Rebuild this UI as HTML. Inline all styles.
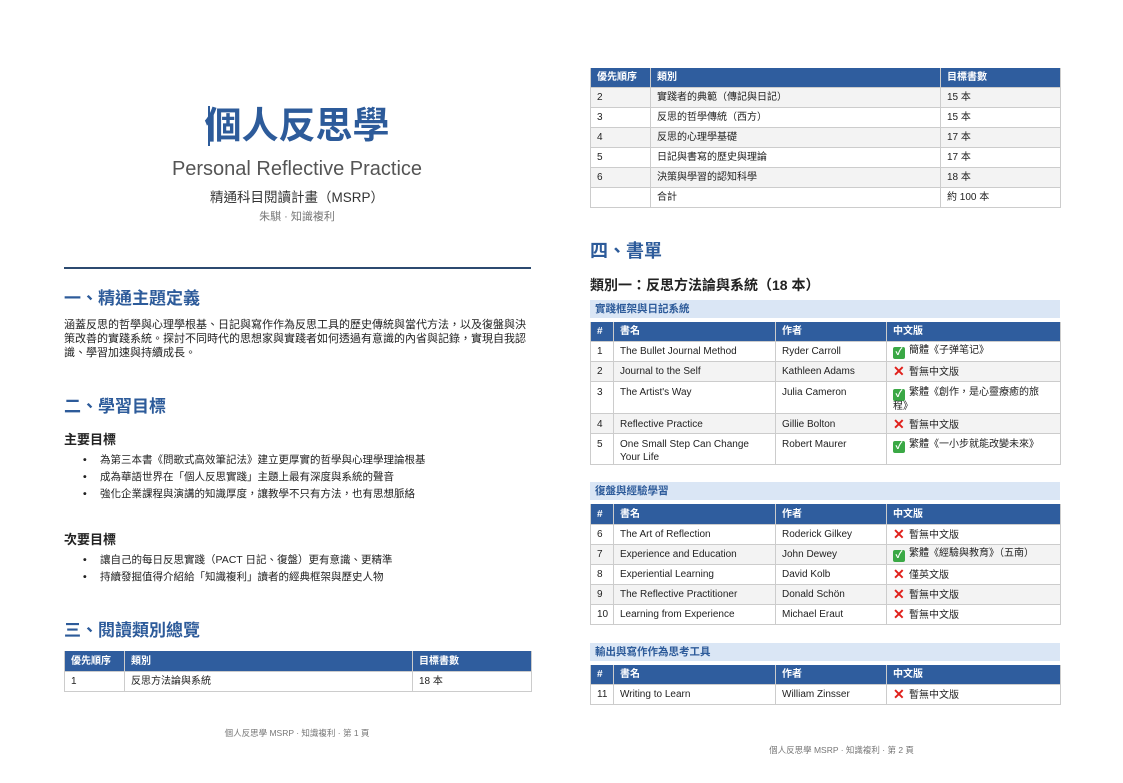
<!DOCTYPE html>
<html><head><meta charset="utf-8"><style>
*{margin:0;padding:0;box-sizing:border-box}
body{width:1123px;height:783px;background:#fff;position:relative;overflow:hidden;font-family:"Liberation Sans","Noto Sans CJK TC",sans-serif;color:#222}
.a{position:absolute;white-space:nowrap}
.h2{font-size:17px;font-weight:bold;color:#2d5b9a;line-height:20px}
.h3{font-size:13px;font-weight:bold;color:#222;line-height:16px}
.p{font-size:11px;line-height:14px;color:#222}
.li{font-size:10.5px;line-height:14px}
.li b{position:absolute;left:-17px;font-weight:bold}
table{position:absolute;border-collapse:collapse;font-size:10px;table-layout:fixed}
td,th{border:1px solid #ccc;padding:2px 6px 0;text-align:left;vertical-align:middle;line-height:12px}
th{background:#2f5d9e;color:#fff;font-weight:bold;border-color:#fff #ccc;border-top:none;border-bottom:none}
td.t{vertical-align:top;padding-top:5px;line-height:12.5px}
tr.g td{background:#f3f3f3}
.band{position:absolute;background:#dae6f5;color:#2d5b9a;font-size:10.5px;font-weight:bold;padding:3px 5px;line-height:12px;height:18px;left:590px;width:470px}
.ok{display:inline-block;width:12px;height:12px;background:#3aa845;border-radius:2px;color:#fff;font-size:10px;line-height:12px;text-align:center;vertical-align:-2px;margin-right:4px;font-weight:bold}
.no{display:inline-block;width:12px;color:#e0201b;font-size:14px;font-weight:bold;line-height:12px;vertical-align:-1px;margin-right:4px}
.ft{font-size:8.5px;color:#777}
</style></head><body>

<div class="a" style="left:0;width:594px;top:104px;text-align:center;font-size:37px;font-weight:bold;color:#2d5b9a;line-height:44px">個人反思學</div>
<div class="a" style="left:208px;top:106px;width:2px;height:40px;background:#2d5b9a"></div>
<div class="a" style="left:0;width:594px;top:157px;text-align:center;font-size:20px;color:#555;line-height:24px">Personal Reflective Practice</div>
<div class="a" style="left:0;width:594px;top:189px;text-align:center;font-size:13.5px;color:#333;line-height:18px">精通科目閱讀計畫（MSRP）</div>
<div class="a" style="left:0;width:594px;top:210px;text-align:center;font-size:11px;color:#777;line-height:14px">朱騏 · 知識複利</div>
<div class="a" style="left:64px;top:267px;width:467px;height:1.5px;background:#2c4a70"></div>

<div class="a h2" style="left:64px;top:289px">一、精通主題定義</div>
<div class="a p" style="left:64px;top:318px">涵蓋反思的哲學與心理學根基、日記與寫作作為反思工具的歷史傳統與當代方法，以及復盤與決<br>策改善的實踐系統。探討不同時代的思想家與實踐者如何透過有意識的內省與記錄，實現自我認<br>識、學習加速與持續成長。</div>

<div class="a h2" style="left:64px;top:397px">二、學習目標</div>
<div class="a h3" style="left:64px;top:432px">主要目標</div>
<div class="a li" style="left:100px;top:453px"><b>•</b>為第三本書《問歌式高效筆記法》建立更厚實的哲學與心理學理論根基</div>
<div class="a li" style="left:100px;top:470px"><b>•</b>成為華語世界在「個人反思實踐」主題上最有深度與系統的聲音</div>
<div class="a li" style="left:100px;top:487px"><b>•</b>強化企業課程與演講的知識厚度，讓教學不只有方法，也有思想脈絡</div>
<div class="a h3" style="left:64px;top:532px">次要目標</div>
<div class="a li" style="left:100px;top:553px"><b>•</b>讓自己的每日反思實踐（PACT 日記、復盤）更有意識、更精準</div>
<div class="a li" style="left:100px;top:570px"><b>•</b>持續發掘值得介紹給「知識複利」讀者的經典框架與歷史人物</div>

<div class="a h2" style="left:64px;top:621px">三、閱讀類別總覽</div>
<table style="left:64px;top:651px;width:467px">
<colgroup><col style="width:60px"><col style="width:288px"><col style="width:119px"></colgroup>
<tr style="height:20px"><th>優先順序</th><th>類別</th><th>目標書數</th></tr>
<tr style="height:20px"><td>1</td><td>反思方法論與系統</td><td>18 本</td></tr>
</table>
<div class="a ft" style="left:0;width:594px;top:727px;text-align:center">個人反思學 MSRP · 知識複利 · 第 1 頁</div>

<table style="left:590px;top:68px;width:470px">
<colgroup><col style="width:60px"><col style="width:290px"><col style="width:120px"></colgroup>
<tr style="height:19px"><th>優先順序</th><th>類別</th><th>目標書數</th></tr>
<tr class="g" style="height:20px"><td>2</td><td>實踐者的典範（傳記與日記）</td><td>15 本</td></tr>
<tr style="height:20px"><td>3</td><td>反思的哲學傳統（西方）</td><td>15 本</td></tr>
<tr class="g" style="height:20px"><td>4</td><td>反思的心理學基礎</td><td>17 本</td></tr>
<tr style="height:20px"><td>5</td><td>日記與書寫的歷史與理論</td><td>17 本</td></tr>
<tr class="g" style="height:20px"><td>6</td><td>決策與學習的認知科學</td><td>18 本</td></tr>
<tr style="height:20px"><td></td><td>合計</td><td>約 100 本</td></tr>
</table>

<div class="a" style="left:590px;top:240px;font-size:18px;font-weight:bold;color:#2d5b9a;line-height:22px">四、書單</div>
<div class="a" style="left:590px;top:276px;font-size:14px;font-weight:bold;color:#222;line-height:18px">類別一：反思方法論與系統（18 本）</div>

<div class="band" style="top:300px">實踐框架與日記系統</div>
<table style="left:590px;top:322px;width:470px">
<colgroup><col style="width:23px"><col style="width:162px"><col style="width:111px"><col style="width:174px"></colgroup>
<tr style="height:19px"><th>#</th><th>書名</th><th>作者</th><th>中文版</th></tr>
<tr style="height:20px"><td>1</td><td>The Bullet Journal Method</td><td>Ryder Carroll</td><td><span class="ok">✓</span>簡體《子弹笔记》</td></tr>
<tr class="g" style="height:20px"><td>2</td><td>Journal to the Self</td><td>Kathleen Adams</td><td><span class="no">✕</span>暫無中文版</td></tr>
<tr style="height:30px"><td class="t">3</td><td class="t">The Artist's Way</td><td class="t">Julia Cameron</td><td class="t" style="white-space:nowrap"><span class="ok">✓</span>繁體《創作，是心靈療癒的旅<br>程》</td></tr>
<tr class="g" style="height:20px"><td>4</td><td>Reflective Practice</td><td>Gillie Bolton</td><td><span class="no">✕</span>暫無中文版</td></tr>
<tr style="height:31px"><td class="t">5</td><td class="t">One Small Step Can Change Your Life</td><td class="t">Robert Maurer</td><td class="t"><span class="ok">✓</span>繁體《一小步就能改變未來》</td></tr>
</table>

<div class="band" style="top:482px">復盤與經驗學習</div>
<table style="left:590px;top:504px;width:470px">
<colgroup><col style="width:23px"><col style="width:162px"><col style="width:111px"><col style="width:174px"></colgroup>
<tr style="height:20px"><th>#</th><th>書名</th><th>作者</th><th>中文版</th></tr>
<tr style="height:20px"><td>6</td><td>The Art of Reflection</td><td>Roderick Gilkey</td><td><span class="no">✕</span>暫無中文版</td></tr>
<tr class="g" style="height:20px"><td>7</td><td>Experience and Education</td><td>John Dewey</td><td><span class="ok">✓</span>繁體《經驗與教育》（五南）</td></tr>
<tr style="height:20px"><td>8</td><td>Experiential Learning</td><td>David Kolb</td><td><span class="no">✕</span>僅英文版</td></tr>
<tr class="g" style="height:20px"><td>9</td><td>The Reflective Practitioner</td><td>Donald Schön</td><td><span class="no">✕</span>暫無中文版</td></tr>
<tr style="height:20px"><td>10</td><td>Learning from Experience</td><td>Michael Eraut</td><td><span class="no">✕</span>暫無中文版</td></tr>
</table>

<div class="band" style="top:643px">輸出與寫作作為思考工具</div>
<table style="left:590px;top:665px;width:470px">
<colgroup><col style="width:23px"><col style="width:162px"><col style="width:111px"><col style="width:174px"></colgroup>
<tr style="height:19px"><th>#</th><th>書名</th><th>作者</th><th>中文版</th></tr>
<tr style="height:20px"><td>11</td><td>Writing to Learn</td><td>William Zinsser</td><td><span class="no">✕</span>暫無中文版</td></tr>
</table>
<div class="a ft" style="left:560px;width:563px;top:744px;text-align:center">個人反思學 MSRP · 知識複利 · 第 2 頁</div>
</body></html>
